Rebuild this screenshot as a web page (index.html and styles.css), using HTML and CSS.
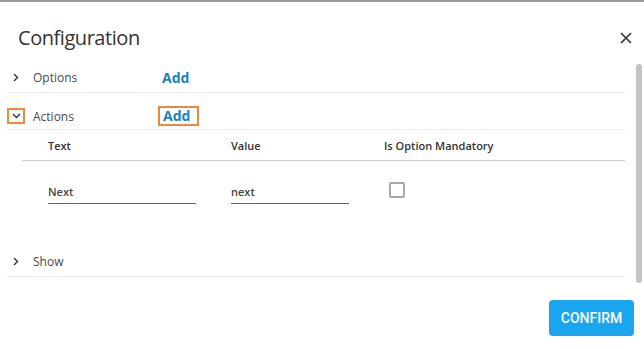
FILE: index.html
```html
<!DOCTYPE html>
<html>
	<head>
		<title>Configuration</title>
		<link rel="stylesheet" href="styles.css">
	</head>
	<body>
		<div class="dialog">
			<div class="dialog-header">
				<h2 class="dialog-title">Configuration</h2>
				<button class="close-btn" type="button" aria-label="Close">
					<svg width="12" height="12" viewBox="0 0 12 12"><path d="M1 1L11 11M11 1L1 11" stroke="#333" stroke-width="1.6" fill="none"/></svg>
				</button>
			</div>
			<div class="dialog-body">
				<div class="content">
					<div class="section section-options">
						<span class="toggle">
							<svg width="6" height="9" viewBox="0 0 6 9"><path d="M1 1L4.5 4.5L1 8" stroke="#333" stroke-width="1.4" fill="none"/></svg>
						</span>
						<span class="section-label">Options</span>
						<a class="add-link" href="#">Add</a>
					</div>
					<div class="section section-actions">
						<span class="toggle toggle-focus">
							<svg width="9" height="6" viewBox="0 0 9 6"><path d="M1 1L4.5 4.5L8 1" stroke="#333" stroke-width="1.4" fill="none"/></svg>
						</span>
						<span class="section-label">Actions</span>
						<a class="add-link add-focus" href="#">Add</a>
					</div>
					<div class="actions-table">
						<div class="table-head">
							<span>Text</span>
							<span>Value</span>
							<span>Is Option Mandatory</span>
						</div>
						<div class="table-row">
							<input class="field field-text" type="text" value="Next">
							<input class="field field-value" type="text" value="next">
							<span class="checkbox"></span>
						</div>
					</div>
					<div class="section section-show">
						<span class="toggle">
							<svg width="6" height="9" viewBox="0 0 6 9"><path d="M1 1L4.5 4.5L1 8" stroke="#333" stroke-width="1.4" fill="none"/></svg>
						</span>
						<span class="section-label">Show</span>
					</div>
				</div>
				<div class="scrollbar"><div class="scroll-thumb"></div></div>
			</div>
			<div class="dialog-footer">
				<button class="confirm-btn" type="button">CONFIRM</button>
			</div>
		</div>
	</body>
</html>
```

FILE: styles.css
```css
* {
	box-sizing: border-box;
}

body {
	margin: 0;
	font-family: 'Open Sans', 'Noto Sans', sans-serif;
	color: #333;
	background: #fff;
}

.dialog {
	width: 644px;
	height: 349px;
	border-top: 2px solid #9a9a9a;
	display: flex;
	flex-direction: column;
}

.dialog-header {
	display: flex;
	align-items: center;
	justify-content: space-between;
	padding: 10px 12px 0 18px;
	height: 60px;
}

.dialog-title {
	margin: 0;
	font-size: 20px;
	font-weight: 400;
	color: #333;
	letter-spacing: -0.45px;
}

.close-btn {
	border: 0;
	background: none;
	padding: 0;
	width: 12px;
	height: 12px;
	margin-top: 1px;
	cursor: pointer;
}

.close-btn svg {
	display: block;
}

.dialog-body {
	display: flex;
	height: 224px;
}

.content {
	flex: 1;
	padding: 0 11px 0 7px;
}

.scrollbar {
	width: 8px;
	padding: 2px 2px 0 0;
}

.scroll-thumb {
	width: 6px;
	height: 219px;
	background: #c4c4c4;
	border-radius: 3px;
}

.section {
	display: flex;
	align-items: center;
	border-bottom: 1px solid #ececec;
	font-size: 12px;
}

.section-options {
	height: 31px;
}

.section-actions {
	height: 37px;
	padding-top: 10px;
}

.section-show {
	height: 31px;
}

.toggle {
	width: 18px;
	height: 16px;
	display: flex;
	align-items: center;
	justify-content: center;
	margin-right: 8px;
}

.toggle svg {
	display: block;
}

.toggle-focus {
	border: 2px solid #ec8a3a;
}

.section-label {
	width: 125px;
	color: #4a4a4a;
	font-weight: 500;
}

.add-link {
	color: #1a7fc3;
	font-weight: 700;
	font-size: 14px;
	text-decoration: none;
	padding: 0 3px 0 4px;
}

.add-focus {
	border: 2px solid #ec8a3a;
	padding: 0 7px 0 3px;
	line-height: 16px;
}

.actions-table {
	margin-left: 15px;
	height: 116px;
}

.table-head {
	display: grid;
	grid-template-columns: 183px 153px 1fr;
	padding-left: 26px;
	height: 31px;
	align-items: center;
	border-bottom: 1px solid #cfcfcf;
	font-size: 11px;
	font-weight: 600;
	color: #333;
}

.table-row {
	display: grid;
	grid-template-columns: 148px 35px 118px 40px 16px;
	padding-left: 26px;
	padding-top: 19px;
	align-items: center;
}

.field {
	border: 0;
	border-bottom: 1px solid #666;
	font-family: inherit;
	font-size: 11px;
	font-weight: 600;
	color: #444;
	height: 24px;
	padding: 0;
	outline: none;
}

.field-text {
	grid-column: 1;
}

.field-value {
	grid-column: 3;
}

.checkbox {
	grid-column: 5;
	width: 16px;
	height: 16px;
	border: 2px solid #a8a8a8;
	border-radius: 2px;
	margin-top: -5px;
}

.dialog-footer {
	display: flex;
	justify-content: flex-end;
	padding: 14px 10px 0 0;
}

.confirm-btn {
	background: #19a6ef;
	color: #fff;
	border: 0;
	border-radius: 4px;
	width: 85px;
	height: 36px;
	font-family: Roboto, sans-serif;
	font-weight: 500;
	font-size: 14px;
	cursor: pointer;
}
```
